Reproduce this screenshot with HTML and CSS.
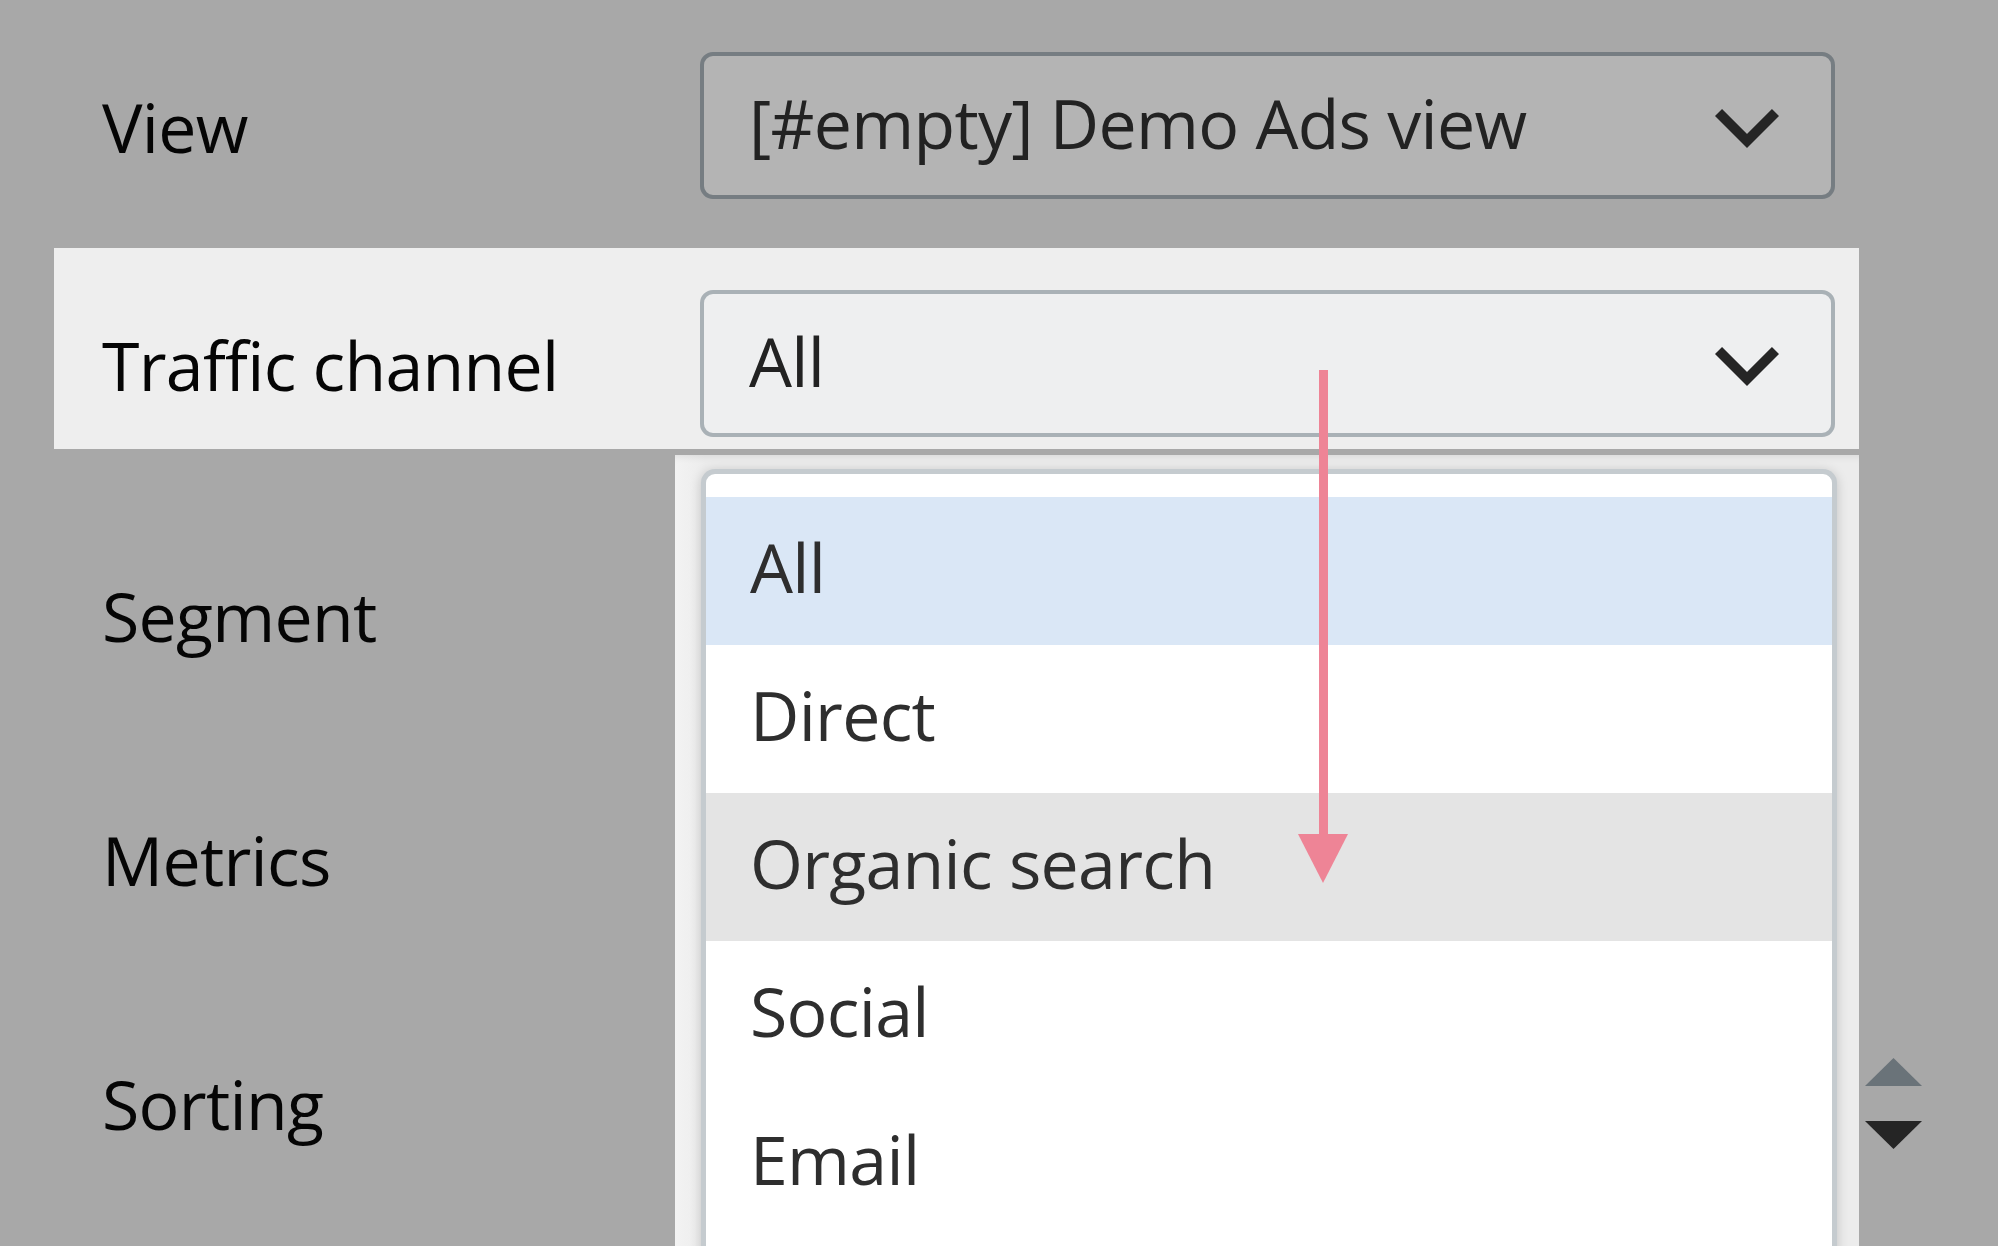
FILE: index.html
```html
<!DOCTYPE html>
<html lang="en">
<head>
<meta charset="utf-8">
<title>Report settings</title>
<link rel="stylesheet" href="styles.css">
</head>
<body>
<div class="page">
  <div class="form">
    <div class="row row-first">
      <div class="label">View</div>
      <div class="select select-dim">
        <span class="select-text">[#empty] Demo Ads view</span>
        <svg class="chevron" viewBox="0 0 64 44" width="64" height="44"><polyline points="3.5,7.5 32,36 60.5,7.5"/></svg>
      </div>
    </div>
    <div class="row row-active">
      <div class="label">Traffic channel</div>
      <div class="select select-open">
        <span class="select-text">All</span>
        <svg class="chevron" viewBox="0 0 64 44" width="64" height="44"><polyline points="3.5,7.5 32,36 60.5,7.5"/></svg>
      </div>
    </div>
    <div class="row">
      <div class="label">Segment</div>
      <div class="select select-dim"></div>
    </div>
    <div class="row">
      <div class="label">Metrics</div>
      <div class="select select-dim"></div>
    </div>
    <div class="row">
      <div class="label">Sorting</div>
      <div class="select select-dim"></div>
      <div class="sort-toggle">
        <svg class="tri tri-up" viewBox="0 0 57 28" width="57" height="28"><polygon points="0,28 28.5,0 57,28"/></svg>
        <svg class="tri tri-down" viewBox="0 0 57 28" width="57" height="28"><polygon points="0,0 57,0 28.5,28"/></svg>
      </div>
    </div>
  </div>

  <div class="dropdown">
    <ul class="options">
      <li class="option option-selected">All</li>
      <li class="option">Direct</li>
      <li class="option option-hover">Organic search</li>
      <li class="option">Social</li>
      <li class="option">Email</li>
    </ul>
  </div>

  <svg class="scroll-arrow" viewBox="0 0 54 520" width="54" height="520">
    <rect x="23" y="2" width="9" height="470"/>
    <polygon points="2,466 52,466 27,515"/>
  </svg>
</div>
</body>
</html>
```

FILE: styles.css
```css
* { box-sizing: border-box; }

html, body {
  margin: 0;
  padding: 0;
}

body {
  background: #a8a8a8;
  font-family: "Open Sans", "Noto Sans", sans-serif;
  width: 1998px;
  height: 1246px;
  overflow: hidden;
}

.page {
  position: relative;
  width: 1998px;
  height: 1246px;
}

.form {
  display: flex;
  flex-direction: column;
  align-items: flex-start;
  padding-left: 54px;
}

.row {
  display: flex;
  align-items: center;
  padding: 92px 24px 5px 48px;
}

.row-first {
  margin-top: 52px;
  padding-top: 0;
  padding-bottom: 0;
}

.row-active {
  margin-top: 49px;
  padding-top: 42px;
  padding-bottom: 12px;
  background: #eeeeee;
}

.label {
  width: 598px;
  flex: none;
  font-size: 68px;
  line-height: 1;
  letter-spacing: -0.7px;
  color: #050505;
  padding-top: 3px;
}

.select {
  width: 1135px;
  height: 147px;
  flex: none;
  display: flex;
  align-items: center;
  justify-content: space-between;
  padding: 0 52px 0 45px;
  border: 4px solid #767d82;
  border-radius: 13px;
  background: #b4b4b4;
  font-size: 68px;
  line-height: 1;
  letter-spacing: -0.7px;
  color: #222222;
}

.select-open {
  border-color: #a9b1b6;
  background: #eeeff0;
}

.select-text {
  display: block;
  margin-bottom: 6px;
}

.chevron {
  display: block;
  flex: none;
  margin-top: 2px;
}

.chevron polyline {
  fill: none;
  stroke: #252525;
  stroke-width: 10;
  stroke-linejoin: miter;
  stroke-linecap: butt;
}

.sort-toggle {
  display: flex;
  flex-direction: column;
  gap: 35px;
  margin-left: 30px;
  margin-top: 2px;
}

.tri { display: block; }
.tri-up polygon { fill: #6a7379; }
.tri-down polygon { fill: #252525; }

/* open dropdown overlay */
.dropdown {
  position: absolute;
  left: 675px;
  top: 455px;
  width: 1184px;
  height: 800px;
  background: linear-gradient(to right, #f3f3f3, #ececec 30px);
  padding: 14px 22px 0 26px;
  box-shadow: inset 0 8px 10px -8px rgba(0, 0, 0, 0.12);
}

.options {
  list-style: none;
  margin: 0;
  padding: 23px 0 0 0;
  background: #ffffff;
  border: 5px solid #c5cbcf;
  border-bottom: none;
  border-radius: 14px 14px 0 0;
  box-shadow: 0 2px 12px rgba(0, 0, 0, 0.18);
  height: 820px;
  overflow: hidden;
}

.option {
  height: 148px;
  display: flex;
  align-items: center;
  padding-left: 44px;
  padding-bottom: 9px;
  font-size: 68px;
  line-height: 1;
  letter-spacing: -0.7px;
  color: #2e2e2e;
}

.option-selected { background: #dae7f6; }
.option-hover { background: #e4e4e4; }

.scroll-arrow {
  position: absolute;
  left: 1296px;
  top: 368px;
}

.scroll-arrow rect,
.scroll-arrow polygon {
  fill: #ee8496;
}
```
